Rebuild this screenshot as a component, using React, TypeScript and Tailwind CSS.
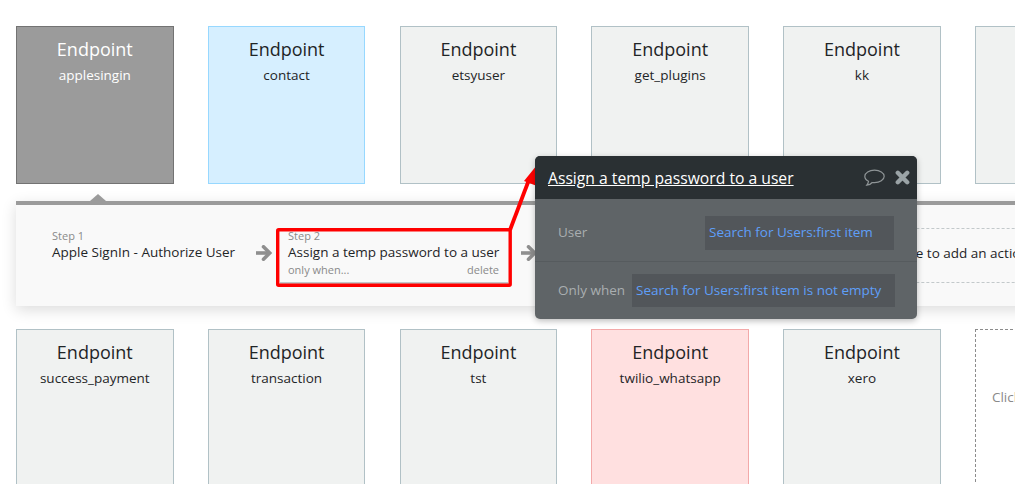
const font = { fontFamily: '"Open Sans", "Noto Sans", sans-serif' };

type CardProps = { name?: string; tone?: 'plain' | 'dark' | 'blue' | 'red' };

const tones = {
  plain: 'bg-[#f0f2f1] border-[#b1c1c6] text-[#1f2527]',
  dark: 'bg-[#9b9b9b] border-[#737373] text-white',
  blue: 'bg-[#d6efff] border-[#97d8ff] text-[#1f2527]',
  red: 'bg-[#ffe0e0] border-[#f3a9a9] text-[#1f2527]',
};

const Card = ({ name, tone = 'plain' }: CardProps) => (
  <div className={`w-[157.6px] h-[158px] shrink-0 border pt-[9px] text-center ${tones[tone]}`}>
    <div className="text-[18px] leading-[26px]">Endpoint</div>
    <div className="text-[13.5px] leading-[20px] mt-[3px]">{name}</div>
  </div>
);

const StepArrow = () => (
  <svg className="shrink-0 mt-[15px]" width="17" height="16" viewBox="0 0 17 16" fill="none" stroke="#8f8f8f" strokeWidth="3.6">
    <path d="M0 8h13" />
    <path d="M7.500 1.800L13.700 8l-6.200 6.200" strokeLinecap="round" />
  </svg>
);

const App = () => {
  return (
    <div className="relative w-[1015px] h-[484px] overflow-hidden bg-white" style={font}>
      <div className="pl-[16px] pt-[26px]">
        {/* top row of endpoints */}
        <div className="flex gap-[34.2px] w-[1200px]">
          <Card name="applesingin" tone="dark" />
          <Card name="contact" tone="blue" />
          <Card name="etsyuser" />
          <Card name="get_plugins" />
          <Card name="kk" />
          <Card />
        </div>

        {/* workflow steps */}
        <div className="relative mt-[17px] w-[1100px] h-[105px] border-t-[4px] border-[#9b9b9b] bg-[#f9f9f9] shadow-[0_4px_14px_rgba(0,0,0,0.14)]">
          <div className="absolute left-[81.5px] -top-[11px] w-0 h-0 border-x-[8px] border-x-transparent border-b-[7px] border-b-[#9b9b9b] -translate-x-1/2" />
          <div className="flex items-start h-full pl-[36px] pt-[25px] text-[#1f2527]">
            <div className="w-[204px] shrink-0">
              <div className="text-[11px] leading-[12px] text-[#8a8a8a]">Step 1</div>
              <div className="text-[13.5px] leading-[18px] mt-[1px] whitespace-nowrap">Apple SignIn - Authorize User</div>
            </div>
            <StepArrow />
            <div className="ml-[7px] w-[228px] h-[54px] shrink-0 pl-[8px] pr-[9px] border-b-[2px] border-[#c2c8ca]">
              <div className="text-[11px] leading-[12px] text-[#8a8a8a]">Step 2</div>
              <div className="text-[13.5px] leading-[18px] mt-[1px] whitespace-nowrap">Assign a temp password to a user</div>
              <div className="flex justify-between text-[11px] leading-[16px] mt-[1px] text-[#8a8a8a]">
                <span>only when...</span>
                <span>delete</span>
              </div>
            </div>
            <div className="ml-[13px]">
              <StepArrow />
            </div>
            <div className="ml-[12px] w-[560px] h-[55px] shrink-0 border-y border-dashed border-[#c3c9cb] flex items-center pl-[312px] pb-[5px] text-[13.5px] -mt-[2px] whitespace-nowrap">
              Click here to add an action...
            </div>
          </div>
        </div>

        {/* bottom row of endpoints */}
        <div className="flex gap-[34.2px] w-[1200px] mt-[23px]">
          <Card name="success_payment" />
          <Card name="transaction" />
          <Card name="tst" />
          <Card name="twilio_whatsapp" tone="red" />
          <Card name="xero" />
          <div className="w-[157.6px] h-[158px] shrink-0 border border-dashed border-[#8c8c8c] pt-[57px] pl-[16px] text-[13.5px] text-[#8a8a8a] whitespace-nowrap">
            Click here to add
          </div>
        </div>
      </div>

      {/* red annotation drawn over the editor */}
      <svg className="absolute left-0 top-0 pointer-events-none" width="1015" height="484">
        <rect x="277.7" y="229.700" width="232.500" height="55.500" rx="1" fill="none" stroke="#ff0000" strokeWidth="3.400" />
        <path d="M510 230 L530 177" stroke="#ff0000" strokeWidth="3.800" fill="none" />
        <path d="M537 165 L524 181 L537 186 Z" fill="#ff0000" />
      </svg>

      {/* action popup */}
      <div className="absolute left-[535px] top-[156px] w-[382px] h-[163px] rounded-[5px] overflow-hidden bg-[#5f6467] shadow-[0_2px_6px_rgba(0,0,0,0.25)]">
        <div className="h-[43px] bg-[#2a3033] flex items-center pl-[13px] pr-[7px]">
          <span className="text-[15.7px] font-medium text-white underline flex-1 pt-[2px]">Assign a temp password to a user</span>
          <svg width="21" height="18" viewBox="0 0 21 18" fill="none" stroke="#8e9496" strokeWidth="1.200">
            <path d="M10.500 1.200C5.200 1.200.8 3.800.8 7.300c0 2.100 1.500 3.900 3.700 5-.2 1.500-.9 2.800-1.700 3.900 2.200-.3 4.200-1.300 5.400-2.700.7.100 1.500.2 2.300.2 5.300 0 9.700-2.800 9.700-6.400S15.800 1.200 10.500 1.200z" />
          </svg>
          <svg className="ml-[10px]" width="15" height="15" viewBox="0 0 15 15" stroke="#9aa3a6" strokeWidth="4.400" strokeLinecap="round">
            <path d="M2.800 2.800l9.400 9.400M12.200 2.800l-9.400 9.400" />
          </svg>
        </div>
        <div className="h-[63px] flex items-center pl-[23px] pr-[23px] pt-[5px] justify-between border-b border-[#565b5e] text-[13.5px]">
          <span className="text-[#a9aeb0]">User</span>
          <div className="w-[189px] h-[34px] bg-[#52565a] flex items-center pl-[4px] text-[#5f9ff8]">Search for Users:first item</div>
        </div>
        <div className="h-[57px] flex items-center pl-[23px] text-[13.5px]">
          <span className="text-[#a9aeb0] whitespace-nowrap w-[74px]">Only when</span>
          <div className="w-[263px] h-[33px] bg-[#52565a] flex items-center pl-[4px] text-[#5f9ff8] whitespace-nowrap">Search for Users:first item is not empty</div>
        </div>
      </div>
    </div>
  );
};

export default App;
